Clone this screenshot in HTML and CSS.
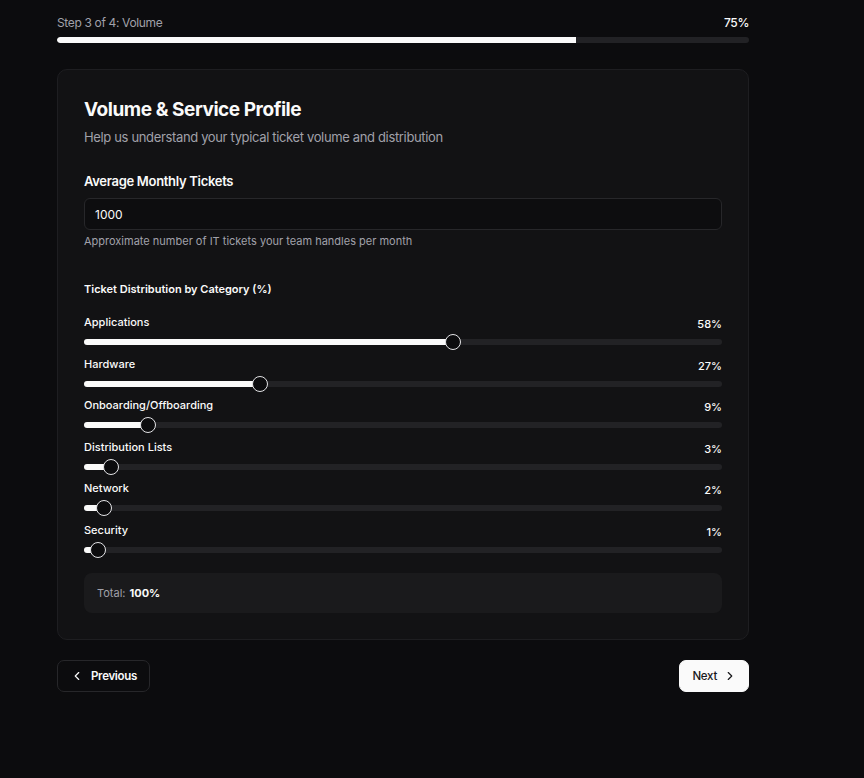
FILE: index.html
```html
<!DOCTYPE html>
<html lang="en">
<head>
<meta charset="utf-8">
<title>Volume &amp; Service Profile</title>
<link rel="stylesheet" href="styles.css">
</head>
<body>
<div class="wrap">
  <div class="progress-head">
    <span class="step">Step 3 of 4: Volume</span>
    <span class="pct">75%</span>
  </div>
  <div class="progress"><div class="progress-fill" style="width:75%"></div></div>

  <section class="card">
    <h1 class="title">Volume &amp; Service Profile</h1>
    <p class="subtitle">Help us understand your typical ticket volume and distribution</p>

    <label class="field-label" for="tickets">Average Monthly Tickets</label>
    <input class="input" id="tickets" type="text" value="1000">
    <p class="help">Approximate number of IT tickets your team handles per month</p>

    <h2 class="dist-title">Ticket Distribution by Category (%)</h2>
    <div class="sliders">
      <div class="slider-row">
        <div class="row-head"><span class="row-label">Applications</span><span class="row-val">58%</span></div>
        <div class="slider" style="--v:0.58"><div class="track"><div class="fill"></div></div><div class="thumb"></div></div>
      </div>
      <div class="slider-row">
        <div class="row-head"><span class="row-label">Hardware</span><span class="row-val">27%</span></div>
        <div class="slider" style="--v:0.27"><div class="track"><div class="fill"></div></div><div class="thumb"></div></div>
      </div>
      <div class="slider-row">
        <div class="row-head"><span class="row-label">Onboarding/Offboarding</span><span class="row-val">9%</span></div>
        <div class="slider" style="--v:0.09"><div class="track"><div class="fill"></div></div><div class="thumb"></div></div>
      </div>
      <div class="slider-row">
        <div class="row-head"><span class="row-label">Distribution Lists</span><span class="row-val">3%</span></div>
        <div class="slider" style="--v:0.03"><div class="track"><div class="fill"></div></div><div class="thumb"></div></div>
      </div>
      <div class="slider-row">
        <div class="row-head"><span class="row-label">Network</span><span class="row-val">2%</span></div>
        <div class="slider" style="--v:0.02"><div class="track"><div class="fill"></div></div><div class="thumb"></div></div>
      </div>
      <div class="slider-row">
        <div class="row-head"><span class="row-label">Security</span><span class="row-val">1%</span></div>
        <div class="slider" style="--v:0.01"><div class="track"><div class="fill"></div></div><div class="thumb"></div></div>
      </div>
    </div>

    <div class="total">Total: <strong>100%</strong></div>
  </section>

  <div class="nav">
    <button class="btn btn-outline">
      <svg width="16" height="16" viewBox="0 0 24 24" fill="none" stroke="currentColor" stroke-width="2" stroke-linecap="round" stroke-linejoin="round"><path d="m15 18-6-6 6-6"/></svg>
      Previous
    </button>
    <button class="btn btn-primary">
      Next
      <svg width="16" height="16" viewBox="0 0 24 24" fill="none" stroke="currentColor" stroke-width="2" stroke-linecap="round" stroke-linejoin="round"><path d="m9 18 6-6-6-6"/></svg>
    </button>
  </div>
</div>
</body>
</html>
```

FILE: styles.css
```css
* { box-sizing: border-box; }
html, body { margin: 0; padding: 0; }
body {
  background: #0c0c0e;
  color: #fafafa;
  font-family: Inter, "Liberation Sans", Arial, sans-serif;
  height: 778px;
  overflow: hidden;
}
.wrap {
  width: 692px;
  margin-left: 57px;
  padding-top: 15px;
}
.progress-head {
  display: flex;
  justify-content: space-between;
  font-size: 12px;
  line-height: 16px;
  letter-spacing: -0.35px;
}
.step { color: #a1a1aa; }
.pct { color: #fafafa; font-weight: 500; }
.progress {
  margin-top: 6px;
  height: 6px;
  border-radius: 999px;
  background: #222225;
  overflow: hidden;
}
.progress-fill {
  height: 100%;
  background: #fafafa;
  border-radius: 999px 0 0 999px;
}
.card {
  margin-top: 26px;
  background: #121214;
  border: 1px solid #1e1e21;
  border-radius: 10px;
  padding: 26px;
}
.title {
  margin: 0;
  font-size: 19px;
  line-height: 28px;
  font-weight: 700;
  letter-spacing: -0.45px;
}
.subtitle {
  margin: 3px 0 0;
  font-size: 13px;
  line-height: 20px;
  color: #a1a1aa;
  letter-spacing: -0.35px;
}
.field-label {
  display: block;
  margin-top: 24px;
  font-size: 13px;
  line-height: 20px;
  font-weight: 600;
  letter-spacing: -0.3px;
}
.input {
  display: block;
  width: 100%;
  margin-top: 7px;
  height: 32px;
  padding: 0 10px;
  background: #0d0d0f;
  border: 1px solid #27272a;
  border-radius: 6px;
  color: #fafafa;
  font-family: inherit;
  font-size: 12px;
  outline: none;
}
.help {
  margin: 3px 0 0;
  font-size: 11px;
  line-height: 16px;
  color: #a1a1aa;
}
.dist-title {
  margin: 32px 0 0;
  font-size: 11px;
  line-height: 16px;
  font-weight: 600;
}
.sliders {
  margin-top: 17px;
  display: flex;
  flex-direction: column;
  gap: 5.6px;
}
.row-head {
  display: flex;
  justify-content: space-between;
  align-items: flex-end;
  font-size: 11px;
  line-height: 16px;
  font-weight: 500;
  height: 16px;
}
.row-val { position: relative; top: 2px; }
.slider {
  position: relative;
  margin-top: 4px;
  height: 16px;
  display: flex;
  align-items: center;
}
.track {
  width: 100%;
  height: 6px;
  border-radius: 999px;
  background: #222225;
  overflow: hidden;
}
.fill {
  height: 100%;
  width: calc(8px + (100% - 16px) * var(--v));
  background: #fafafa;
}
.thumb {
  position: absolute;
  top: 0;
  left: calc((100% - 16px) * var(--v));
  width: 16px;
  height: 16px;
  border-radius: 50%;
  background: #0c0c0e;
  border: 1.5px solid #e4e4e7;
}
.total {
  margin-top: 15px;
  height: 40px;
  display: flex;
  align-items: center;
  gap: 4px;
  padding: 0 13px;
  background: #1a1a1c;
  border-radius: 8px;
  font-size: 11px;
  color: #a1a1aa;
}
.total strong { color: #fafafa; font-weight: 700; }
.nav {
  margin-top: 20px;
  display: flex;
  justify-content: space-between;
}
.btn {
  display: inline-flex;
  align-items: center;
  height: 32px;
  border-radius: 7px;
  font-family: inherit;
  font-size: 11.5px;
  font-weight: 600;
  letter-spacing: -0.3px;
  cursor: pointer;
}
.btn svg { width: 14px; height: 14px; flex: none; }
.btn-outline {
  background: #0c0c0e;
  color: #fafafa;
  border: 1px solid #27272a;
  padding: 0 12px 0 12px;
  gap: 7px;
}
.btn-primary {
  background: #fafafa;
  color: #18181b;
  border: 1px solid #fafafa;
  font-weight: 500;
  padding: 0 11px 0 12px;
  gap: 6px;
}
```
